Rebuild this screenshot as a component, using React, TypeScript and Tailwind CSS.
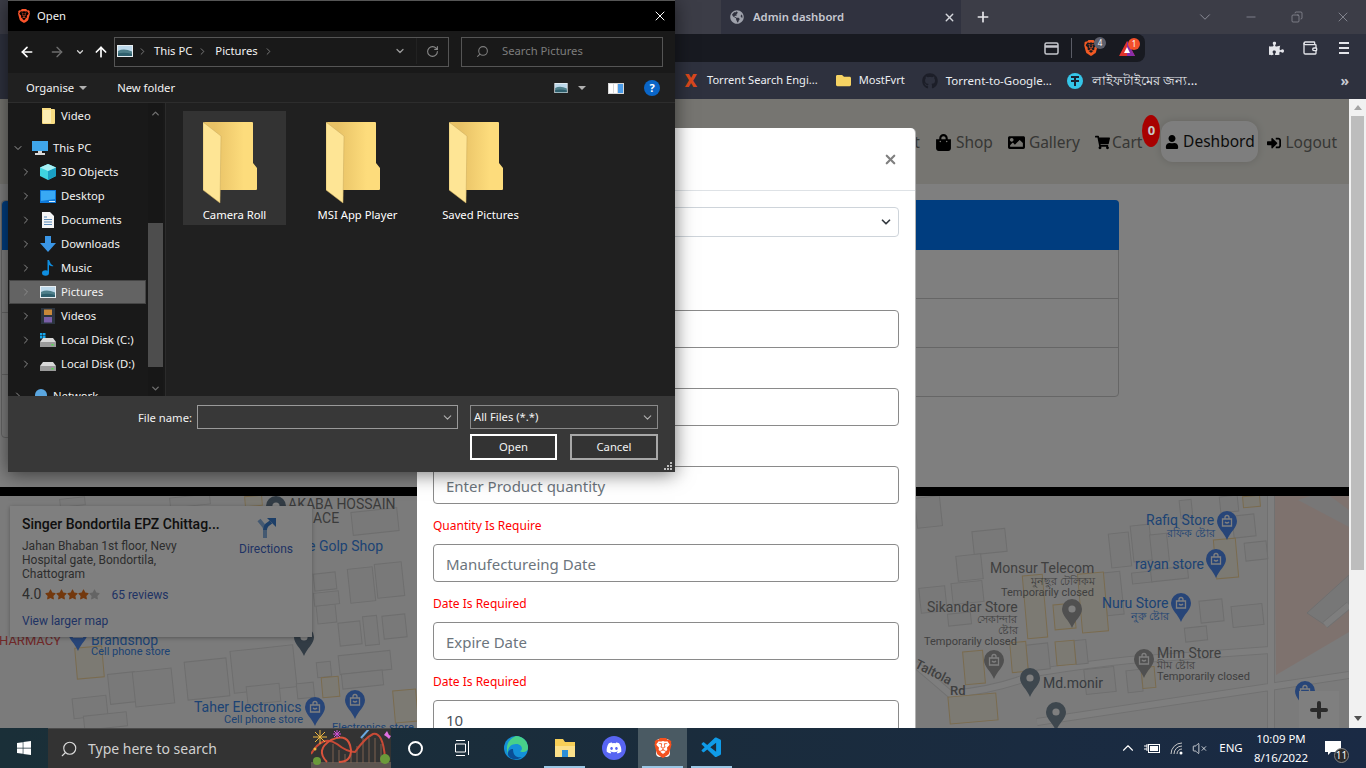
import React from "react";
import { FaShoppingBag, FaImage, FaShoppingCart, FaUser, FaSignInAlt, FaPuzzlePiece, FaGlobeAmericas, FaGithub, FaWindows, FaDiscord, FaStar, FaFolder } from "react-icons/fa";
import { SiBrave } from "react-icons/si";
import { VscVscode } from "react-icons/vsc";
import { Wallet, VolumeX, Search, Plus, X, Minus, ChevronDown, ChevronRight, ChevronUp, ArrowLeft, ArrowRight, ArrowUp, RotateCw, Copy } from "lucide-react";

const treeRows = [
  { label: "3D Objects", icon: "cube" },
  { label: "Desktop", icon: "desktop" },
  { label: "Documents", icon: "doc" },
  { label: "Downloads", icon: "down" },
  { label: "Music", icon: "music" },
  { label: "Pictures", icon: "pic", active: true },
  { label: "Videos", icon: "film" },
  { label: "Local Disk (C:)", icon: "diskc" },
  { label: "Local Disk (D:)", icon: "disk" },
];

// first two rows sit behind the file dialog
const fields = [
  { hint: "", error: "" },
  { hint: "", error: "" },
  { hint: "Enter Product quantity", error: "Quantity Is Require" },
  { hint: "Manufectureing Date", error: "Date Is Required" },
  { hint: "Expire Date", error: "Date Is Required" },
  { hint: "10", error: "", value: true },
];

// [x, y, w, h]
const buildings = [
  [973, 530, 33, 23], [957, 555, 25, 25], [920, 587, 26, 25], [952, 582, 31, 21], [948, 613, 23, 12],
  [1110, 533, 20, 34], [1132, 525, 19, 36], [1151, 534, 17, 28], [1132, 572, 20, 11], [1151, 568, 37, 12],
  [1105, 572, 17, 43], [1245, 542, 22, 18], [1233, 515, 22, 22], [1232, 605, 31, 21], [1200, 600, 23, 22],
  [1185, 627, 22, 14], [1027, 644, 22, 26], [1075, 640, 12, 24], [1085, 668, 30, 25], [1127, 670, 15, 22],
  [1180, 500, 12, 18], [1220, 496, 18, 16], [186, 660, 42, 38], [232, 648, 63, 42], [109, 673, 27, 30],
  [134, 670, 39, 35], [73, 697, 34, 20], [84, 714, 43, 14], [247, 685, 33, 18], [339, 653, 52, 19],
  [342, 672, 41, 15], [349, 568, 25, 34], [376, 563, 27, 34], [339, 622, 22, 23], [364, 616, 14, 29],
  [383, 615, 23, 23], [317, 605, 19, 18], [314, 592, 25, 13], [314, 573, 22, 17], [352, 510, 46, 23],
  [317, 662, 14, 15], [297, 683, 17, 15], [60, 498, 25, 8], [170, 496, 40, 10], [916, 497, 25, 30],
];

const lots = [
  [1215, 539, 22, 39], [1025, 575, 20, 63], [1080, 573, 26, 59], [1054, 604, 21, 25], [1056, 641, 19, 24],
  [964, 651, 20, 33], [1011, 642, 16, 30], [949, 695, 48, 27], [1142, 667, 13, 21], [1243, 496, 17, 11],
  [76, 647, 27, 31], [322, 677, 17, 20], [394, 690, 23, 32], [245, 496, 17, 10],
];

const blue = "#3a86e8";
const mapLabels = [
  { t: "AKABA HOSSAIN", x: 288, y: 509, s: 14, c: "#777777" },
  { t: "ACE", x: 313, y: 523, s: 14, c: "#777777" },
  { t: "e Golp Shop", x: 308, y: 551, s: 14, c: blue },
  { t: "Taher Electronics", x: 194, y: 712, s: 14, c: blue },
  { t: "Cell phone store", x: 224, y: 723, s: 11, c: blue },
  { t: "Electronics store", x: 332, y: 731, s: 11, c: blue },
  { t: "Rafiq Store", x: 1146, y: 525, s: 14, c: blue },
  { t: "রফিক ষ্টোর", x: 1167, y: 537, s: 11, c: blue },
  { t: "rayan store", x: 1135, y: 569, s: 14, c: blue },
  { t: "Monsur Telecom", x: 990, y: 573, s: 14, c: "#808080" },
  { t: "মুনছুর টেলিকম", x: 1031, y: 585, s: 11, c: "#808080" },
  { t: "Temporarily closed", x: 1001, y: 596, s: 11, c: "#808080" },
  { t: "Nuru Store", x: 1102, y: 608, s: 14, c: blue },
  { t: "নুরু ষ্টোর", x: 1131, y: 620, s: 11, c: blue },
  { t: "Sikandar Store", x: 927, y: 612, s: 14, c: "#808080" },
  { t: "সেকান্দার", x: 977, y: 623, s: 11, c: "#808080" },
  { t: "ষ্টোর", x: 998, y: 634, s: 11, c: "#808080" },
  { t: "Temporarily closed", x: 924, y: 645, s: 11, c: "#808080" },
  { t: "Mim Store", x: 1157, y: 658, s: 14, c: "#808080" },
  { t: "মীম ষ্টোর", x: 1157, y: 669, s: 11, c: "#808080" },
  { t: "Temporarily closed", x: 1157, y: 680, s: 11, c: "#808080" },
  { t: "Md.monir", x: 1043, y: 688, s: 14, c: "#707880" },
];

// [center x, top y, color, kind]
const pins: [number, number, string, string][] = [
  [276, 496, "#64788a", "dot"],
  [78, 622, "#4f8af0", "bag"],
  [304, 627, "#64788a", "dot"],
  [315, 697, "#4f8af0", "bag"],
  [355, 690, "#4f8af0", "bag"],
  [1227, 511, "#4f8af0", "bag"],
  [1216, 549, "#4f8af0", "bag"],
  [1181, 593, "#4f8af0", "bag"],
  [1072, 599, "#a0a0a0", "dot"],
  [994, 650, "#a0a0a0", "bag"],
  [1144, 649, "#a0a0a0", "bag"],
  [1030, 668, "#7c8e9c", "dot"],
  [1056, 702, "#7c8e9c", "dot"],
  [1305, 681, "#4f8af0", "bag"],
];

const roads = "M1037 722L1349 675M915 664L950 694Q1000 690 1040 672Q1090 664 1130 660L1270 650M1271 496V728M1325 625L1349 605";

const MapCanvas = () => (
  <svg width="1349" height="232" viewBox="0 496 1349 232" className="block">
    <rect x="0" y="496" width="1349" height="232" fill="#f6f6f6" />
    <path d="M1274 496H1349V632L1276 675Z" fill="#fde4dc" />
    <path d="M1298 500L1310 496H1330L1349 510V527Z" fill="#f0eeee" />
    <path d="M1307 613L1349 575V605L1325 625Z" fill="#efefef" stroke="#dddddd" />
    <path d={roads} fill="none" stroke="#e2e2e2" strokeWidth="8" />
    <path d={roads} fill="none" stroke="#fdfdfd" strokeWidth="6" />
    {buildings.map(([x, y, w, h], i) => (
      <rect key={i} x={x} y={y} width={w} height={h} fill="#f2f2f2" stroke="#dcdcdc" transform={`rotate(-6 ${x + w / 2} ${y + h / 2})`} />
    ))}
    {lots.map(([x, y, w, h], i) => (
      <rect key={i} x={x} y={y} width={w} height={h} fill="#f8f4e6" stroke="#f4d79e" transform={`rotate(-5 ${x + w / 2} ${y + h / 2})`} />
    ))}
    {pins.map(([cx, top, color, kind], i) => (
      <g key={i} transform={`translate(${cx - 10} ${top})`}>
        <path d="M10 0a10 10 0 0 1 10 10c0 7-7 11-10 19C7 21 0 17 0 10A10 10 0 0 1 10 0z" fill={color} />
        {kind === "dot" ? (
          <circle cx="10" cy="10" r="3.6" fill="#fff" />
        ) : (
          <path d="M5.5 8h9v7h-9zM8 8V6.5a2 2 0 0 1 4 0V8M8 11q2 2 4 0" fill="none" stroke="#fff" strokeWidth="1.3" />
        )}
      </g>
    ))}
    <g fontFamily="Roboto, 'Noto Sans', sans-serif">
      {mapLabels.map((l, i) => (
        <text key={i} x={l.x} y={l.y} fontSize={l.s} fill={l.c}>
          {l.t}
        </text>
      ))}
      <text x="91" y="645" fontSize="14" fill={blue}>Brandshop</text>
      <text x="91" y="655" fontSize="11" fill={blue}>Cell phone store</text>
      <text x="-1" y="645" fontSize="13" fill="#e05050">HARMACY</text>
      <text transform="translate(914 667) rotate(27)" fontSize="13" fontWeight="500" fill="#808080">Taltola</text>
      <text x="950" y="695" fontSize="13" fontWeight="500" fill="#808080">Rd</text>
    </g>
  </svg>
);

const InfoCard = () => (
  <div className="absolute left-[10px] top-[10px] h-[131px] w-[302px] bg-white pl-3 pt-[9px] font-['Roboto',sans-serif] shadow-[0_1px_4px_rgba(0,0,0,.3)]">
    <div className="flex">
      <div className="w-[217px]">
        <div className="whitespace-nowrap text-[14px] font-medium leading-[18px] text-[#202020]">Singer Bondortila EPZ Chittag...</div>
        <div className="mt-[6px] text-[12px] leading-[14px] text-[#5b5b5b]">
          Jahan Bhaban 1st floor, Nevy
          <br />
          Hospital gate, Bondortila,
          <br />
          Chattogram
        </div>
      </div>
      <div className="-ml-[3px] flex w-[60px] flex-col items-center">
        <svg width="20" height="20" viewBox="0 0 20 20" className="mt-[3px]" fill="none" stroke="#3a7fd0" strokeWidth="4">
          <path d="M9 20V11Q9 9 7 7L3 2" opacity="0.6" />
          <path d="M9 12Q9 9 11 7L15 4" />
          <path d="M11 0H20V9Z" fill="#3a7fd0" strokeWidth="0" />
        </svg>
        <span className="mt-[2px] text-[12px] text-[#3f66c8]">Directions</span>
      </div>
    </div>
    <div className="mt-[3px] flex items-center">
      <span className="text-[14px] text-[#5b5b5b]">4.0</span>
      <span className="ml-[4px] flex">
        {[0, 1, 2, 3].map((i) => (
          <FaStar key={i} size={11} className="text-[#e7711b]" />
        ))}
        <FaStar size={11} className="text-[#c8c8c8]" />
      </span>
      <span className="ml-[11px] text-[12px] text-[#3f66c8]">65 reviews</span>
    </div>
    <div className="mt-[7px] text-[12px] text-[#3f66c8]">View larger map</div>
  </div>
);

const NavLink = ({ icon, label, className }: { icon: React.ReactNode; label: string; className: string }) => (
  <div className={`mt-[10px] flex items-center text-[15.5px] text-[#6e6e6a] ${className}`}>
    {icon}
    <span>{label}</span>
  </div>
);

const Page = () => (
  <div className="relative w-[1349px]">
    <div className="flex h-[85px] items-start justify-end bg-[#ecebe3] pt-[22px] font-['Noto_Sans',sans-serif]">
      <NavLink icon={null} label="About" className="mr-[15px]" />
      <NavLink icon={<FaShoppingBag size={17} className="text-black" />} label="Shop" className="mr-[15px] gap-1" />
      <NavLink icon={<FaImage size={17} className="text-black" />} label="Gallery" className="mr-[15px] gap-1" />
      <NavLink icon={<FaShoppingCart size={15} className="text-black" />} label="Cart" className="gap-[2px]" />
      <div className="relative z-20 -mt-[6px] mr-[1px] flex h-8 w-[18px] items-center justify-center rounded-[50%] bg-[#a80000] text-[13px] font-bold text-[#c8c8c8]">0</div>
      <div className="flex h-[41px] w-[97px] items-center justify-center gap-1 rounded-xl bg-[#fdfdfd] pt-px text-[15.5px] text-[#181818] shadow-[0_0_8px_rgba(0,0,0,.15)]">
        <FaUser size={14} className="text-black" />
        <span>Deshbord</span>
      </div>
      <NavLink icon={<FaSignInAlt size={14} className="text-black" />} label="Logout" className="ml-[9px] mr-[12px] gap-1" />
    </div>

    <div className="h-[303px] bg-white pt-4">
      <div className="flex w-[1119px] gap-4 pl-px">
        <div className="h-[238px] w-[500px] rounded-[4px] border border-[#cccccc]">
          <div className="h-[49px] rounded-t-[4px] bg-[#007bff]" />
          <div className="h-[63px] border-b border-[#cccccc]" />
          <div className="h-[62px] border-b border-[#cccccc]" />
        </div>
        <div className="h-[197px] flex-1 rounded-[4px] border border-[#cccccc]">
          <div className="-mx-px -mt-px h-[50px] rounded-t-[4px] bg-[#007bff]" />
          <div className="h-[49px] border-b border-[#cccccc]" />
          <div className="h-[49px] border-b border-[#cccccc]" />
        </div>
      </div>
    </div>

    <div className="h-[9px] bg-black" />

    <div className="relative h-[232px] overflow-hidden">
      <MapCanvas />
      <InfoCard />
      <div className="absolute right-[10px] bottom-0 flex h-[37px] w-10 items-center justify-center bg-white">
        <Plus size={24} strokeWidth={4} className="text-[#555]" />
      </div>
    </div>

    <div className="absolute inset-0 z-10 bg-black/50" />
  </div>
);

const PageScrollbar = () => (
  <div className="flex w-[17px] flex-col items-center bg-[#f1f1f1]">
    <div className="mt-[6px] h-0 w-0 border-x-[4px] border-b-[5px] border-x-transparent border-b-[#a3a3a3]" />
    <div className="mt-[6px] h-[454px] w-[13px] bg-[#bdbdbd]" />
    <div className="mt-auto mb-[7px] h-0 w-0 border-x-[4px] border-t-[5px] border-x-transparent border-t-[#505050]" />
  </div>
);

const Modal = () => (
  <div className="absolute top-[128px] bottom-[40px] left-[417px] z-20 w-[499px] overflow-hidden rounded-t-[5px] border-r border-black/30 bg-white font-['Noto_Sans',sans-serif]">
    <div className="flex h-[63px] items-center justify-end border-b border-[#dee2e6] pr-[17px]">
      <X size={15} strokeWidth={3.5} className="text-[#808080]" />
    </div>
    <div className="px-4 pt-4">
      <div className="flex h-[30px] items-center justify-end rounded-[4px] border border-[#ced4da] pr-[5px]">
        <ChevronDown size={14} strokeWidth={3} className="text-[#343a40]" />
      </div>
      <div className="h-[73px]" />
      {fields.map((f, i) => (
        <div key={i} className="h-[78px]">
          <div className={`flex h-[38px] items-center rounded-[4px] border border-[#8a8a8a] px-3 pt-[2px] text-[15px] ${f.value ? "text-[#495057]" : "text-[#6c757d]"}`}>
            {f.hint}
          </div>
          <div className="flex h-10 items-center pt-1 text-[12px] text-[#ff0000]">{f.error}</div>
        </div>
      ))}
    </div>
  </div>
);

const Folder = () => (
  <svg width="54" height="82" viewBox="0 0 54 82">
    <defs>
      <linearGradient id="folderBack" x1="0" x2="1" y1="0" y2="0">
        <stop offset="0.2" stopColor="#e8c266" />
        <stop offset="0.75" stopColor="#fddc7c" />
      </linearGradient>
    </defs>
    <path d="M1 0H49Q50 0 50 1V41L54 46V67Q54 68 53 68H17Z" fill="url(#folderBack)" />
    <path d="M0 0L18 14L17 81L0 68Z" fill="#fee595" stroke="#c9a95b" strokeWidth="0.5" />
  </svg>
);

const Landscape = ({ w = 16, h = 12 }: { w?: number; h?: number }) => (
  <svg width={w} height={h} viewBox="0 0 16 12">
    <rect width="16" height="12" fill="#e8eef2" />
    <rect x="1" y="1" width="14" height="10" fill="#bcd8ea" />
    <path d="M1 6Q7 3 15 6.5V11H1Z" fill="#4f7f8a" />
    <path d="M1 8.5Q8 7 15 9V11H1Z" fill="#2f5f6d" />
  </svg>
);

const TreeIcon = ({ kind }: { kind: string }) => {
  if (kind === "cube")
    return (
      <svg width="16" height="16" viewBox="0 0 16 16">
        <path d="M8 0L16 3.5V12L8 16L0 12V3.5Z" fill="#3fd4e0" />
        <path d="M8 7L16 3.5V12L8 16Z" fill="#1aa0c4" />
        <path d="M8 0L16 3.5L8 7L0 3.5Z" fill="#a8f0f4" />
      </svg>
    );
  if (kind === "desktop")
    return (
      <svg width="16" height="13" viewBox="0 0 16 13">
        <rect width="16" height="13" fill="#0e78d8" />
        <path d="M1 1H15V9L1 11Z" fill="#39a9f4" />
        <path d="M9 11h6v1H9z" fill="#d8eefc" />
      </svg>
    );
  if (kind === "doc")
    return (
      <svg width="12" height="16" viewBox="0 0 12 16">
        <path d="M0 0H8L12 4V16H0Z" fill="#f4f4f4" />
        <path d="M2 5h3M2 7.5h8M2 10h8M2 12.5h8" stroke="#5a8ab8" strokeWidth="1" />
      </svg>
    );
  if (kind === "down")
    return (
      <svg width="16" height="16" viewBox="0 0 16 16">
        <path d="M5 0H11V7H16L8 16L0 7H5Z" fill="#3a96e6" />
      </svg>
    );
  if (kind === "music")
    return (
      <svg width="12" height="16" viewBox="0 0 12 16">
        <ellipse cx="3.5" cy="13" rx="3.5" ry="2.8" fill="#0f8ee0" />
        <path d="M5.5 13V0H7Q8 4 11.5 6Q10 7 7 5V13Z" fill="#0f8ee0" />
      </svg>
    );
  if (kind === "pic") return <Landscape />;
  if (kind === "film")
    return (
      <svg width="14" height="16" viewBox="0 0 14 16">
        <rect width="14" height="16" fill="#2c3540" />
        <rect x="3" y="1.5" width="8" height="5.5" fill="#c8883a" />
        <rect x="3" y="9" width="8" height="5.5" fill="#7a5fa8" />
      </svg>
    );
  return (
    <svg width="16" height="14" viewBox="0 0 16 14">
      {kind === "diskc" && <path d="M0 0h2.5v2.5H0zM3 0h2.5v2.5H3zM0 3h2.5v2.5H0zM3 3h2.5v2.5H3z" fill="#14a5ec" />}
      <path d="M3 5H13L16 9H0Z" fill="#d8d8d8" />
      <rect y="9" width="16" height="5" fill="#9a9a9a" />
      <rect x="11.5" y="11" width="2" height="1.5" fill="#4be04b" />
    </svg>
  );
};

const Tile = ({ label, selected }: { label: string; selected?: boolean }) => (
  <div className={`flex h-[114px] w-[103px] flex-col items-center pt-[11px] ${selected ? "bg-[#333333]" : ""}`}>
    <div className="pr-[9px]">
      <Folder />
    </div>
    <span className="mt-[3px] whitespace-nowrap text-white">{label}</span>
  </div>
);

const Caret = ({ className = "" }: { className?: string }) => (
  <span className={`h-0 w-0 border-x-[4px] border-t-[4px] border-x-transparent border-t-[#b0b0b0] ${className}`} />
);

const FileDialog = () => (
  <div className="absolute top-0 left-2 z-30 flex h-[472px] w-[667px] flex-col border-t border-[#555] bg-[#202020] font-['Noto_Sans',sans-serif] text-[11.25px] text-[#f2f2f2] shadow-[0_2px_18px_rgba(0,0,0,.55)]">
    <div className="flex h-[30px] items-center bg-black pl-[9px] pr-[7px]">
      <SiBrave size={14} className="text-[#fb542b]" />
      <span className="ml-[6px]">Open</span>
      <X size={16} strokeWidth={1.5} className="ml-auto text-white" />
    </div>

    <div className="flex h-[42px] items-center bg-[#191919]">
      <div className="flex w-[106px] items-center pl-[11px]">
        <ArrowLeft size={16} strokeWidth={2.5} className="text-white" />
        <ArrowRight size={16} strokeWidth={2} className="ml-[14px] text-[#6e6e6e]" />
        <ChevronDown size={10} strokeWidth={3} className="ml-[10px] text-[#d0d0d0]" />
        <ArrowUp size={16} strokeWidth={2.5} className="ml-2 text-white" />
      </div>
      <div className="flex h-[30px] w-[335px] items-center border border-[#555] pb-[2px] pl-[2px]">
        <Landscape />
        <ChevronRight size={11} className="ml-1 text-[#808080]" />
        <span className="ml-[6px]">This PC</span>
        <ChevronRight size={11} className="ml-[5px] text-[#808080]" />
        <span className="ml-[7px]">Pictures</span>
        <ChevronRight size={11} className="ml-[5px] text-[#808080]" />
        <ChevronDown size={12} strokeWidth={2.5} className="ml-auto mr-[10px] text-[#9a9a9a]" />
        <div className="flex h-full w-[32px] items-center justify-center border-l border-[#222]">
          <RotateCw size={13} className="text-[#8a8a8a]" />
        </div>
      </div>
      <div className="ml-3 flex h-[30px] w-[202px] items-center border border-[#555] pb-[2px] pl-[14px] text-[#7d7d7d]">
        <Search size={13} className="-scale-x-100" />
        <span className="ml-[13px]">Search Pictures</span>
      </div>
    </div>

    <div className="flex h-[30px] items-center border-b border-[#2d2d2d] bg-[#202020] pt-px pl-[18px] pr-[15px]">
      <span>Organise</span>
      <Caret className="ml-[5px]" />
      <span className="ml-[30px]">New folder</span>
      <div className="ml-auto">
        <Landscape w={14} h={10} />
      </div>
      <Caret className="ml-[10px]" />
      <div className="ml-[22px] flex h-[11px] w-4 gap-px bg-[#d8d8d8] p-px">
        <span className="w-[4px] bg-white" />
        <span className="w-[3px] bg-white" />
        <span className="flex-1 bg-[#4a9be8]" />
      </div>
      <span className="ml-5 flex h-4 w-4 items-center justify-center rounded-full bg-[#0a66c8] text-[11px] font-bold text-white">?</span>
    </div>

    <div className="flex min-h-0 flex-1">
      <div className="flex w-[157px] overflow-hidden bg-[#191919]">
        <div className="w-[140px] pt-px">
          <div className="flex h-6 items-center pl-[34px]">
            <svg width="13" height="16" viewBox="0 0 13 16">
              <path d="M0 0H9V1H12Q13 1 13 2V15Q13 16 12 16H1Q0 16 0 15Z" fill="#f8dc82" />
              <path d="M1 2H9V15H1Z" fill="#fdeeb4" />
            </svg>
            <span className="ml-[6px]">Video</span>
          </div>
          <div className="mt-2 flex h-6 items-center pl-[4px]">
            <ChevronDown size={12} strokeWidth={2} className="text-[#9a9a9a]" />
            <svg width="16" height="14" viewBox="0 0 16 14" className="ml-2">
              <rect width="16" height="10" fill="#3fa6ea" />
              <path d="M6 10h4v2H6zM3 12h10v2H3z" fill="#d8d8d8" />
            </svg>
            <span className="ml-[5px]">This PC</span>
          </div>
          {treeRows.map((r) => (
            <div
              key={r.label}
              className={`ml-px flex h-6 w-[137px] items-center border pl-[13px] ${r.active ? "border-[#454545] bg-[#636363]" : "border-transparent"}`}
            >
              <ChevronRight size={12} strokeWidth={2} className="-ml-[3px] text-[#8a8a8a]" />
              <span className="ml-2 flex w-4 justify-center">
                <TreeIcon kind={r.icon} />
              </span>
              <span className="ml-[5px] whitespace-nowrap">{r.label}</span>
            </div>
          ))}
          <div className="mt-2 flex h-6 items-center pl-[4px]">
            <ChevronRight size={12} strokeWidth={2} className="text-[#8a8a8a]" />
            <svg width="16" height="14" viewBox="0 0 16 14" className="ml-2">
              <circle cx="9" cy="6" r="6" fill="#5aa6e0" />
              <rect y="9" width="9" height="5" fill="#d0d0d0" />
            </svg>
            <span className="ml-[5px]">Network</span>
          </div>
        </div>
        <div className="flex w-[15px] flex-col items-center bg-[#171717]">
          <div className="flex h-5 items-center">
            <ChevronUp size={11} strokeWidth={3} className="text-[#707070]" />
          </div>
          <div className="mt-[100px] h-[144px] w-full bg-[#4d4d4d]" />
          <div className="mt-[13px] flex h-4 items-center">
            <ChevronDown size={11} strokeWidth={3} className="text-[#707070]" />
          </div>
        </div>
      </div>
      <div className="flex flex-1 gap-5 border-l border-[#2b2b2b] pt-2 pl-[17px]">
        <Tile label="Camera Roll" selected />
        <Tile label="MSI App Player" />
        <Tile label="Saved Pictures" />
      </div>
    </div>

    <div className="relative h-[76px] bg-[#383838] pt-[9px] pr-[17px]">
      <div className="flex items-center justify-end">
        <span className="pt-[2px]">File name:</span>
        <div className="ml-[5px] flex h-6 w-[261px] items-center justify-end border border-[#9a9a9a] pr-[3px]">
          <ChevronDown size={13} className="text-[#b0b0b0]" />
        </div>
        <div className="ml-3 flex h-6 w-[188px] items-center justify-between border border-[#8a8a8a] pr-[3px] pl-[3px]">
          <span>All Files (*.*)</span>
          <ChevronDown size={13} className="text-[#b0b0b0]" />
        </div>
      </div>
      <div className="mt-[5px] flex justify-end gap-[13px]">
        <div className="flex h-[26px] w-[87px] items-center justify-center border-2 border-white bg-[#333333]">Open</div>
        <div className="flex h-[26px] w-[88px] items-center justify-center border-2 border-[#a8a8a8] bg-[#333333]">Cancel</div>
      </div>
      <svg width="8" height="8" viewBox="0 0 8 8" className="absolute right-[3px] bottom-[2px]" fill="#bdbdbd">
        <path d="M6 0h2v2H6zM3 3h2v2H3zM6 3h2v2H6zM0 6h2v2H0zM3 6h2v2H3zM6 6h2v2H6z" />
      </svg>
    </div>
  </div>
);

const BrowserTop = () => (
  <div className="font-['Noto_Sans',sans-serif]">
    <div className="flex h-[34px] bg-[#3c3d47]">
      <div className="w-[721px]" />
      <div className="flex h-[34px] w-[240px] items-center bg-[#30323f] pl-[9px] pr-[5px]">
        <FaGlobeAmericas size={14} className="text-[#9ea1ab]" />
        <span className="ml-[9px] text-[11.3px] font-semibold text-[#c6c8d1]">Admin dashbord</span>
        <X size={13} strokeWidth={2.5} className="ml-auto text-[#d4d6dc]" />
      </div>
      <div className="flex w-11 items-center justify-center">
        <Plus size={16} strokeWidth={2.5} className="text-[#e8e8ec]" />
      </div>
      <div className="ml-auto flex text-[#9a9ca6]">
        <div className="flex w-[46px] items-center justify-center">
          <ChevronDown size={18} strokeWidth={1.1} />
        </div>
        <div className="flex w-[46px] items-center justify-center">
          <Minus size={14} strokeWidth={1.2} />
        </div>
        <div className="flex w-[46px] items-center justify-center">
          <Copy size={12} strokeWidth={1.3} className="-scale-x-100" />
        </div>
        <div className="flex w-[46px] items-center justify-center">
          <X size={16} strokeWidth={1.1} />
        </div>
      </div>
    </div>

    <div className="flex h-7 bg-[#2e313e]">
      <div className="ml-[120px] flex h-7 w-[1025px] items-center justify-end rounded-r-lg bg-[#181a21]">
        <svg width="15" height="13" viewBox="0 0 15 13" fill="none" stroke="#c4c6cc" strokeWidth="1.5">
          <rect x="1" y="1" width="13" height="11" rx="1.5" />
          <path d="M1 4.5H14" strokeWidth="2.5" />
        </svg>
        <span className="ml-[12px] h-5 w-px bg-[#5a5c66]" />
        <span className="relative ml-[11px] mr-[20px] flex">
          <SiBrave size={16} className="text-[#f25a24]" />
          <span className="absolute -top-[3px] -right-[7px] flex h-[12px] w-[12px] items-center justify-center rounded-full bg-[#5e606c] text-[8px] text-white">4</span>
        </span>
        <span className="relative mr-[10px] flex">
          <svg width="16" height="15" viewBox="0 0 16 15">
            <path d="M8 0L16 15H0Z" fill="#e0332c" />
            <path d="M8 0L16 15H8Z" fill="#8a2da8" />
            <path d="M8 6L11 12H5Z" fill="#fff" />
          </svg>
          <span className="absolute -top-[3px] -right-[5px] flex h-[12px] w-[12px] items-center justify-center rounded-full bg-[#f4502a] text-[8px] text-white">1</span>
        </span>
      </div>
      <div className="ml-auto flex pr-[5px] text-[#e4e5ea]">
        <div className="flex w-[34px] items-center justify-center">
          <FaPuzzlePiece size={15} />
        </div>
        <div className="flex w-[34px] items-center justify-center">
          <Wallet size={16} strokeWidth={2} />
        </div>
        <div className="flex w-[34px] flex-col items-center justify-center gap-[3px]">
          <span className="h-[2px] w-[10px] bg-[#e4e5ea]" />
          <span className="h-[2px] w-[10px] bg-[#e4e5ea]" />
          <span className="h-[2px] w-[10px] bg-[#e4e5ea]" />
        </div>
      </div>
    </div>

    <div className="flex h-[37px] items-center bg-[#2e313e] pl-[683px] pr-[17px] text-[11.1px] text-[#eceef2]">
      <span className="flex w-4 justify-center text-[17px] font-black leading-none text-[#d8481c]">X</span>
      <span className="ml-2">Torrent Search Engi...</span>
      <FaFolder size={15} className="ml-[18px] text-[#f6d363]" />
      <span className="ml-2">MostFvrt</span>
      <FaGithub size={16} className="ml-[17px] text-[#1c1e28]" />
      <span className="ml-2 text-[11.5px]">Torrent-to-Google...</span>
      <svg width="16" height="16" viewBox="0 0 16 16" className="ml-[15px]">
        <circle cx="8" cy="8" r="8" fill="#35c5e8" />
        <path d="M4 4H12M8 4V13M4 8H12" stroke="#1a2030" strokeWidth="2" />
      </svg>
      <span className="ml-[9px] text-[12.8px]">লাইফটাইমের জন্য...</span>
      <span className="ml-auto text-[14px] font-bold text-[#c8cad2]">»</span>
    </div>
  </div>
);

const Coaster = () => (
  <svg width="80" height="38" viewBox="0 0 80 38" className="block">
    <rect y="32" width="80" height="6" fill="#5d5550" />
    <path d="M22 33V14M28 33V20M34 33V24M40 33V24M46 33V16M52 33V8M58 33V8M64 33V8M70 33V14" stroke="#7e6250" strokeWidth="1" />
    <path d="M0 24Q12 4 26 14Q36 22 44 22Q54 8 62 4Q72 2 74 28" fill="none" stroke="#c84a36" strokeWidth="2" />
    <path d="M16 32Q4 20 20 10Q38 2 40 20Q40 32 28 32" fill="none" stroke="#d8533c" strokeWidth="2" />
    <circle cx="6" cy="31" r="4" fill="#6a9a3a" />
    <circle cx="74" cy="29" r="5" fill="#6a9a3a" />
    <path d="M50 8L58 -1" stroke="#6aa8e0" strokeWidth="2" />
    <path d="M9 0V14M2 7H16M4 2L14 12M14 2L4 12" stroke="#f0b840" strokeWidth="1" />
    <path d="M26 0V8M22 4H30M23 1L29 7M29 1L23 7" stroke="#d050d8" strokeWidth="1" />
    <path d="M73 5L76 1L78 5L80 6L78 9L76 7Z" fill="#e070e0" />
    <circle cx="4" cy="19" r="1.5" fill="#f0b840" />
  </svg>
);

const TaskIcon = ({ children, active, line }: { children: React.ReactNode; active?: boolean; line?: boolean }) => (
  <div className={`relative flex h-10 w-[49px] items-center justify-center ${active ? "bg-[#4a5a63]" : ""}`}>
    {children}
    {line && <span className="absolute inset-x-[4px] bottom-0 h-[2px] bg-[#9ac6e4]" />}
  </div>
);

const Taskbar = () => (
  <div className="relative z-40 flex h-10 bg-gradient-to-r from-[#1a2f38] via-[#1a2c3c] to-[#1a2a44] font-['Noto_Sans',sans-serif] text-white">
    <div className="flex w-12 items-center justify-center">
      <FaWindows size={16} />
    </div>
    <div className="flex w-[343px] items-center border-t border-[#4a4a4a] bg-[#333333]">
      <Search size={18} strokeWidth={1.5} className="ml-[12px] -scale-x-100 text-[#dcdcdc]" />
      <span className="ml-[10px] text-[14px] text-[#d0d0d0]">Type here to search</span>
      <div className="ml-auto self-end">
        <Coaster />
      </div>
    </div>
    <div className="flex w-12 items-center justify-center">
      <span className="h-[15px] w-[15px] rounded-full border-2 border-white" />
    </div>
    <div className="flex w-12 items-center justify-center">
      <svg width="16" height="16" viewBox="0 0 16 16" fill="none" stroke="#fff" strokeWidth="1">
        <path d="M1 .5h9M1 15.5h9M.5 4h10v8H.5zM13.5 1v14" />
      </svg>
    </div>
    <div className="ml-1 flex">
      <TaskIcon>
        <svg width="24" height="24" viewBox="0 0 24 24">
          <circle cx="12" cy="12" r="12" fill="#1490d8" />
          <path d="M12 0a12 12 0 0 1 12 12c0 4-6 5-8 3 3 0 3-7-4-7-6 0-9 5-8 10-1-2-4-13 8-18z" fill="#48d08a" />
          <path d="M4 18c0 4 7 8 14 3-5 1-9-1-9-8-3 0-5 2-5 5z" fill="#0a4f96" />
        </svg>
      </TaskIcon>
      <TaskIcon line>
        <svg width="22" height="22" viewBox="0 0 22 22">
          <path d="M1 2H9L11 5H21V20H1Z" fill="#f7cf57" />
          <rect x="1" y="9" width="20" height="11" fill="#fbe08a" />
          <rect x="8" y="13" width="6" height="7" fill="#2d8fd8" />
        </svg>
      </TaskIcon>
      <TaskIcon>
        <span className="flex h-6 w-6 items-center justify-center rounded-full bg-[#5865f2]">
          <FaDiscord size={16} />
        </span>
      </TaskIcon>
      <TaskIcon active line>
        <span className="relative flex h-6 w-5 items-center justify-center">
          <span className="absolute inset-[3px] rounded-sm bg-white" />
          <SiBrave size={24} className="relative text-[#f4511e]" />
        </span>
      </TaskIcon>
      <TaskIcon line>
        <VscVscode size={24} className="text-[#0f9be8]" />
      </TaskIcon>
    </div>
    <div className="ml-auto flex items-center pr-[9px]">
      <div className="flex w-6 justify-center">
        <ChevronUp size={18} strokeWidth={1.5} />
      </div>
      <div className="flex w-6 justify-center">
        <svg width="16" height="11" viewBox="0 0 16 11" fill="none" stroke="#fff">
          <rect x="4.5" y="1.5" width="11" height="8" />
          <rect x="6" y="3" width="8" height="5" fill="#fff" stroke="none" />
          <path d="M0 3h3M0 6h3M3 1v7" />
        </svg>
      </div>
      <div className="ml-px flex w-6 justify-center">
        <svg width="15" height="13" viewBox="0 0 15 13" fill="none" stroke="#c8c8c8">
          <path d="M1 12A11 11 0 0 1 12 1M4 12A8 8 0 0 1 12 4M7 12A5 5 0 0 1 12 7" />
          <circle cx="11" cy="11" r="1.5" fill="#fff" stroke="none" />
        </svg>
      </div>
      <div className="flex w-5 justify-center">
        <VolumeX size={15} strokeWidth={1.2} />
      </div>
      <div className="w-[44px] text-center text-[11.5px]">ENG</div>
      <div className="w-[56px] text-center text-[11.4px] leading-[19px]">
        <div>10:09 PM</div>
        <div>8/16/2022</div>
      </div>
      <div className="relative flex w-12 justify-center">
        <svg width="16" height="15" viewBox="0 0 16 15" fill="#fff">
          <path d="M0 0H16V11H6L3 14V11H0Z" />
        </svg>
        <span className="absolute top-[7px] left-[25px] flex h-[15px] w-[15px] items-center justify-center rounded-full border border-[#888] bg-[#2a2a2a] text-[10px] leading-none">11</span>
      </div>
    </div>
  </div>
);

export default function App() {
  return (
    <div className="relative flex h-[768px] w-[1366px] flex-col overflow-hidden bg-black">
      <BrowserTop />
      <div className="flex h-[629px]">
        <Page />
        <PageScrollbar />
      </div>
      <Taskbar />
      <Modal />
      <FileDialog />
    </div>
  );
}
